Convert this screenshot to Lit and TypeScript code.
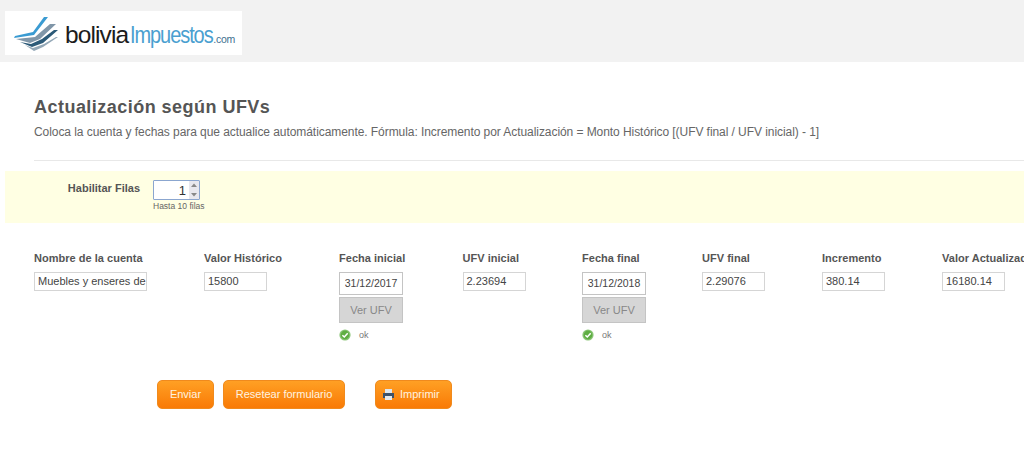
import { LitElement, html, css } from "lit";
import { customElement } from "lit/decorators.js";

const check = html`<svg class="okicon" viewBox="0 0 12 12" width="12" height="12"><circle cx="6" cy="6" r="5.6" fill="#8cc678"/><circle cx="6" cy="6" r="4.4" fill="#5fae43"/><path d="M3.4 6.2 5.3 8 8.7 4.3" fill="none" stroke="#fff" stroke-width="1.5"/></svg>`;

@customElement("app-root")
export class AppRoot extends LitElement {
  static styles = css`
    :host { display: block; width: 1024px; height: 458px; overflow: hidden; background: #fff; font-family: "Liberation Sans", Arial, sans-serif; color: #555; }
    .top { height: 62px; background: #f2f2f2; padding: 11px 0 0 5px; box-sizing: border-box; }
    .logo { width: 237px; height: 44px; background: #fff; display: flex; align-items: center; box-sizing: border-box; padding: 0 0 0 8px; }
    .logo svg { flex: none; }
    .logotext { margin-left: 7px; margin-top: 3px; white-space: nowrap; display: flex; align-items: baseline; font-size: 24px; letter-spacing: -0.9px; }
    .b { color: #1c1c1c; font-size: 24.5px; }
    .i { display: inline-block; color: #4a9fd0; margin-left: 2px; margin-right: -16px; font-size: 23.5px; letter-spacing: -1.25px; transform: scaleX(0.85); transform-origin: left center; }
    .c { color: #3d6f8f; font-size: 10.5px; margin-left: 2px; letter-spacing: -0.3px; }
    .main { padding: 33px 0 0 34px; }
    h1 { margin: 0; font-size: 18px; line-height: 24px; font-weight: bold; color: #555; letter-spacing: 0.47px; }
    .desc { margin: 5px 0 0; font-size: 12px; line-height: 16px; color: #666; white-space: nowrap; letter-spacing: -0.065px; }
    hr { border: 0; border-top: 1px solid #e8e8e8; margin: 20px 0 0; }
    .band { margin: 10px 0 0 5px; height: 52px; background: #ffffe3; display: flex; box-sizing: border-box; padding-top: 9px; }
    .band label { width: 135px; text-align: right; font-size: 11px; font-weight: bold; line-height: 17px; color: #555; }
    .spin-wrap { margin-left: 13px; }
    .spin { width: 47px; height: 20px; box-sizing: border-box; border: 1px solid #8ba6cf; background: #fff; border-radius: 1px; display: flex; justify-content: flex-end; align-items: center; font-size: 13px; color: #333; }
    .arrows { width: 10px; height: 18px; margin-left: 3px; display: flex; flex-direction: column; background: #ececec; }
    .arrows svg { display: block; }
    .hint { font-size: 8.5px; line-height: 10px; color: #666; margin-top: 1px; white-space: nowrap; }
    .cols { display: flex; padding: 28px 0 0 34px; white-space: nowrap; }
    .col { flex: none; }
    .lab { font-size: 11px; font-weight: bold; line-height: 14px; color: #555; letter-spacing: 0.02px; }
    .inp { margin-top: 7px; height: 19px; box-sizing: border-box; border: 1px solid #d5d5d5; background: #fff; font-size: 11px; line-height: 17px; color: #444; padding: 0 3px; overflow: hidden; white-space: nowrap; }
    .date { height: 23px; line-height: 21px; border-color: #c4c4c4; text-align: center; padding: 0; font-size: 10.5px; }
    .ver { margin-top: 2px; height: 26px; box-sizing: border-box; border: 1px solid #c4c4c4; background: #d6d6d6; color: #888; font-size: 11px; font-weight: normal; line-height: 24px; text-align: center; }
    .ok { margin-top: 6px; display: flex; align-items: center; font-size: 9px; line-height: 12px; color: #777; }
    .ok span { margin-left: 8px; }
    .okicon { display: block; }
    .btns { display: flex; padding: 0 0 0 157px; margin-top: 39px; }
    .btn { height: 29px; box-sizing: border-box; border: 1px solid #f08a1d; border-radius: 5px; background: linear-gradient(#ffa024, #f97a06); color: #fff3e0; font-size: 11px; line-height: 27px; display: flex; align-items: center; justify-content: center; white-space: nowrap; }
    .btn.print { justify-content: flex-start; padding-left: 6px; }
    .btn svg { margin-right: 5px; }
  `;

  field(label: string, value: string, w: number, cw: number) {
    return html`<div class="col" style="width:${cw}px"><div class="lab">${label}</div><div class="inp" style="width:${w}px">${value}</div></div>`;
  }
  dateField(label: string, value: string, w: number, cw: number) {
    return html`<div class="col" style="width:${cw}px"><div class="lab">${label}</div>
      <div class="inp date" style="width:${w}px">${value}</div>
      <div class="ver" style="width:${w}px">Ver UFV</div>
      <div class="ok">${check}<span>ok</span></div></div>`;
  }

  render() {
    return html`
      <div class="top"><div class="logo">
        <svg width="45" height="36" viewBox="0 0 45 36">
          <path d="M1 23 21 20 35 2H31L20 17 2 21Z" fill="#3a9bd2"/>
          <path d="M3 24 22 22 37 9H43L27 24 17 28Z" fill="#8096a8"/>
          <path d="M7 27 18 29 29 24 41 15H45L30 28 19 32Z" fill="#2c5a78"/>
          <path d="M12 30 20 33 31 29 43 22H45L30 32 21 36Z" fill="#93a7b6"/>
        </svg>
        <div class="logotext"><span class="b">bolivia</span><span class="i">Impuestos</span><span class="c">.com</span></div>
      </div></div>
      <div class="main">
        <h1>Actualización según UFVs</h1>
        <p class="desc">Coloca la cuenta y fechas para que actualice automáticamente. Fórmula: Incremento por Actualización = Monto Histórico [(UFV final / UFV inicial) - 1]</p>
        <hr />
      </div>
      <div class="band">
        <label>Habilitar Filas</label>
        <div class="spin-wrap">
          <div class="spin">1<div class="arrows">
            <svg width="10" height="9" viewBox="0 0 10 9"><rect width="10" height="9" fill="#e8e8ee"/><path d="M5 2.5 8 6H2Z" fill="#888"/></svg>
            <svg width="10" height="9" viewBox="0 0 10 9"><rect width="10" height="9" fill="#e8e8ee"/><path d="M5 6.5 8 3H2Z" fill="#888"/></svg>
          </div></div>
          <div class="hint">Hasta 10 filas</div>
        </div>
      </div>
      <div class="cols">
        ${this.field("Nombre de la cuenta", "Muebles y enseres de", 113, 170)}
        ${this.field("Valor Histórico", "15800", 63, 135)}
        ${this.dateField("Fecha inicial", "31/12/2017", 64, 123.5)}
        ${this.field("UFV inicial", "2.23694", 63, 119.5)}
        ${this.dateField("Fecha final", "31/12/2018", 64, 120)}
        ${this.field("UFV final", "2.29076", 63, 120)}
        ${this.field("Incremento", "380.14", 63, 120)}
        ${this.field("Valor Actualizado", "16180.14", 63, 120)}
      </div>
      <div class="btns">
        <div class="btn" style="width:57px">Enviar</div>
        <div class="btn" style="width:122px;margin-left:9px">Resetear formulario</div>
        <div class="btn print" style="width:77px;margin-left:30px">
          <svg width="13" height="13" viewBox="0 0 13 13"><rect x="3" y="1" width="7" height="4" fill="#dfe8f0"/><rect x="1" y="5" width="11" height="5" fill="#3d5168"/><rect x="3" y="8" width="7" height="4" fill="#e4e8ec"/></svg>
          Imprimir
        </div>
      </div>
    `;
  }
}
